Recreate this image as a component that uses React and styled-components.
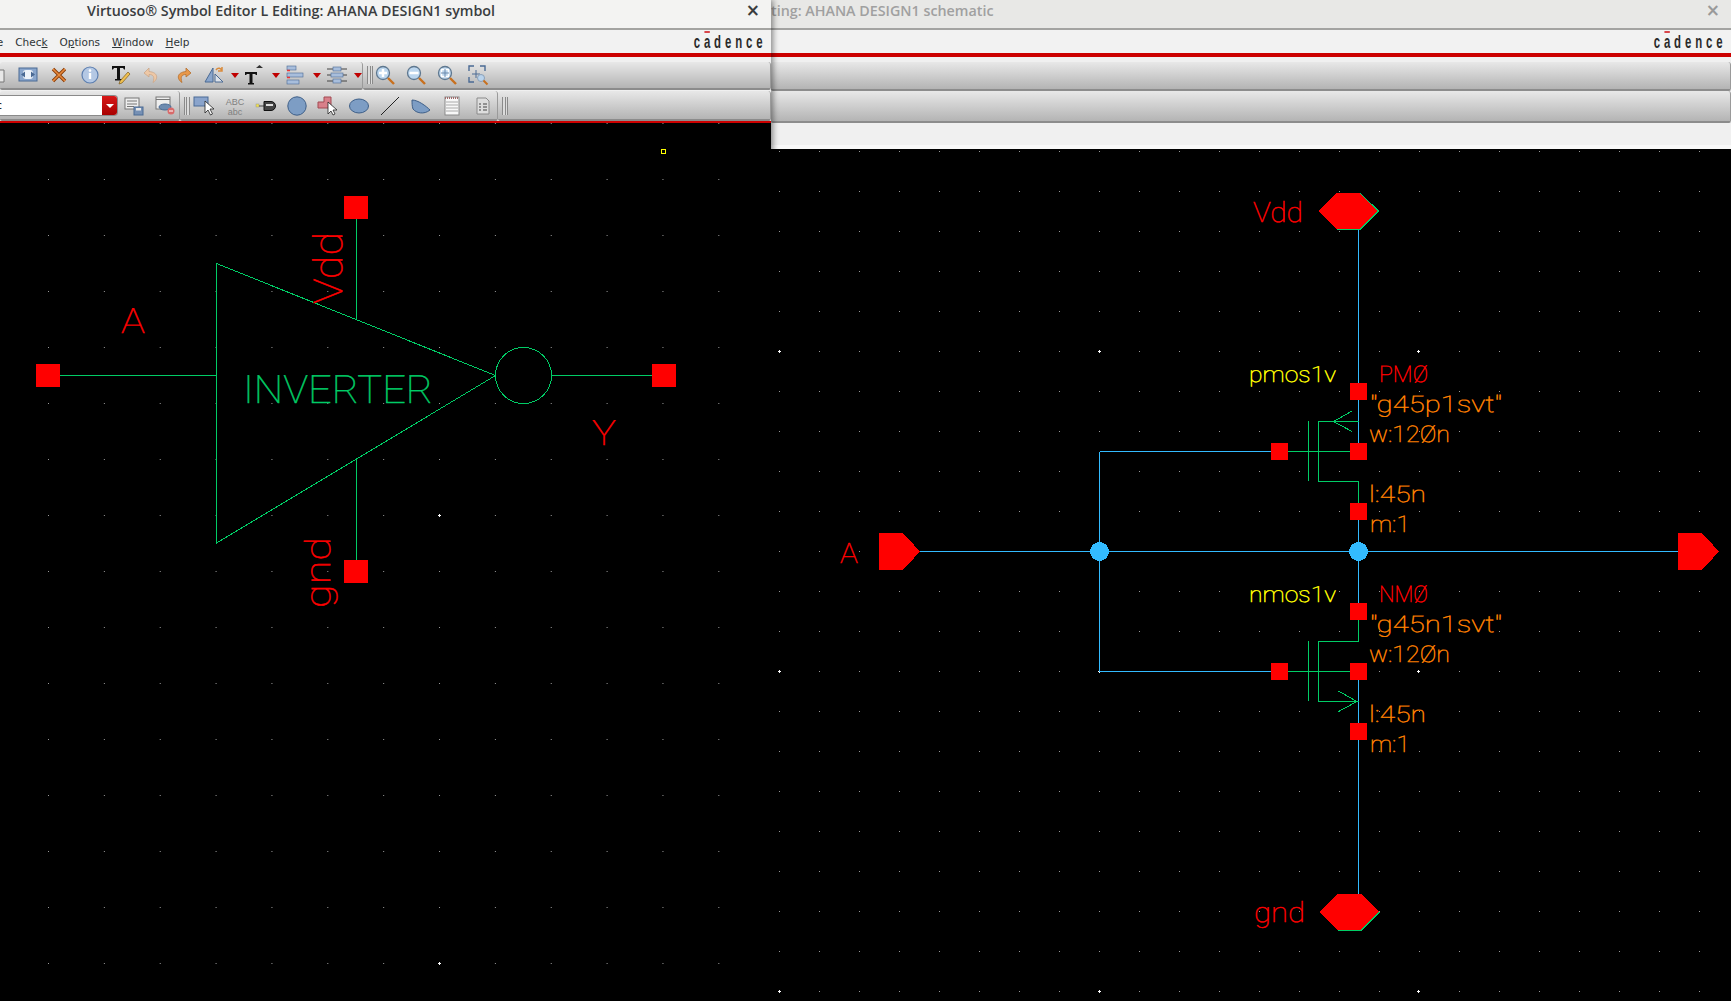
import React from "react";
import styled, { createGlobalStyle } from "styled-components";

const GREEN = "#00cc66";
const BLUE = "#33bbff";
const RED = "#ff0000";
const ORANGE = "#ff8000";
const YELLOW = "#ffff00";

const GlobalStyle = createGlobalStyle`
    html, body {
        margin: 0;
        padding: 0;
        background: #000;
        overflow: hidden;
    }
`;

const Desktop = styled.div`
    display: flex;
    width: 1731px;
    height: 1001px;
    overflow: hidden;
    background: #000;
`;

const Window = styled.div`
    position: relative;
    flex: ${(p) => (p.$front ? "none" : "1")};
    width: ${(p) => (p.$front ? "771px" : "auto")};
    min-width: 0;
    display: flex;
    flex-direction: column;
    overflow: hidden;
    background: #f0f0f0;
`;

const FrontShadow = styled.div`
    flex: none;
    display: flex;
    position: relative;
    z-index: 2;
    box-shadow: 2px 0 6px rgba(0, 0, 0, 0.45);
`;

const TitleBar = styled.div`
    flex: none;
    height: 28px;
    display: flex;
    align-items: center;
    justify-content: space-between;
    box-sizing: border-box;
    padding: 0 11px 7px ${(p) => p.$left}px;
    background: ${(p) => (p.$front ? "#f3f3f2" : "#e8e8e6")};
    color: ${(p) => (p.$front ? "#3a3d3f" : "#a0a0a0")};
    font-family: "Open Sans", sans-serif;
    font-size: 14.3px;
    font-weight: 600;
    white-space: nowrap;
    overflow: hidden;
`;

const Close = styled.span`
    font-family: "DejaVu Sans", sans-serif;
    font-size: 17px;
    font-weight: 700;
    line-height: 1;
    color: ${(p) => (p.$front ? "#3a3d3f" : "#9a9a9a")};
`;

const MenuBar = styled.div`
    flex: none;
    height: 25px;
    display: flex;
    align-items: center;
    justify-content: space-between;
    box-sizing: border-box;
    padding: 0 8px 0 0;
    background: #f2f2f2;
    border-top: 2px solid #a3a3a1;
    font-family: "DejaVu Sans", sans-serif;
    font-size: 10.5px;
    color: #2e3436;
`;

const MenuItems = styled.div`
    display: flex;
    gap: 12px;
    margin-left: -31.7px;
    padding-top: 1px;
`;

const Mnemonic = styled.span`
    text-decoration: underline;
`;

const Logo = styled.span`
    font-family: "Liberation Sans", sans-serif;
    font-size: 19px;
    font-weight: 700;
    letter-spacing: 6.5px;
    margin-left: auto;
    margin-right: -4px;
    color: #2b2b2b;
    line-height: 1;
    transform: scaleX(0.6);
    transform-origin: right center;
`;

const LogoA = styled.span`
    position: relative;

    &::before {
        content: "";
        position: absolute;
        left: 1px;
        top: 0;
        width: 9px;
        height: 2px;
        background: #d8454a;
    }
`;

const RedRule = styled.div`
    flex: none;
    height: ${(p) => p.$height}px;
    background: #cc0000;
`;

const ToolRow = styled.div`
    flex: none;
    display: flex;
    height: ${(p) => p.$height}px;
    margin-top: ${(p) => p.$top}px;
`;

const Segment = styled.div`
    display: flex;
    align-items: center;
    flex: ${(p) => (p.$grow ? "1" : "none")};
    width: ${(p) => (p.$width ? `${p.$width}px` : "auto")};
    box-sizing: border-box;
    overflow: hidden;
    padding-top: ${(p) => p.$pad || 0}px;
    background: linear-gradient(#e8e8e8, #b4b4b4);
    border-bottom: 2px solid #8c8c8c;
    border-right: 1px solid #9a9a9a;
    border-radius: 3px 3px 2px 2px;
`;

const Tool = styled.span`
    flex: none;
    width: 31px;
    display: flex;
    align-items: center;
    justify-content: center;
    margin-left: ${(p) => p.$shift || 0}px;

    svg {
        overflow: visible;
    }
`;

const DropArrow = styled.span`
    flex: none;
    width: 10px;
    height: 5px;
    display: flex;
    justify-content: center;

    &::before {
        content: "";
        border-left: 4px solid transparent;
        border-right: 4px solid transparent;
        border-top: 5px solid #c00000;
    }
`;

const Handle = styled.span`
    flex: none;
    width: 6px;
    height: 18px;
    margin: 0 ${(p) => p.$after || 0}px 0 4px;
    background: repeating-linear-gradient(90deg, #8a8a8a 0 1px, #dcdcdc 1px 2.5px);
`;

const Combo = styled.div`
    flex: none;
    width: 118px;
    height: 21px;
    display: flex;
    align-items: center;
    justify-content: space-between;
    box-sizing: border-box;
    background: #fff;
    border: 1px solid #8a8a8a;
    border-left: none;
    border-radius: 0 4px 4px 0;
    font-family: "DejaVu Sans", sans-serif;
    font-size: 11px;
    color: #222;
    overflow: hidden;
`;

const ComboText = styled.span`
    margin-left: -4px;
`;

const ComboButton = styled.span`
    width: 15px;
    height: 100%;
    display: flex;
    align-items: center;
    justify-content: center;
    background: linear-gradient(#d81818, #a80000);

    &::before {
        content: "";
        border-left: 4px solid transparent;
        border-right: 4px solid transparent;
        border-top: 4px solid #fff;
    }
`;

const Strip = styled.div`
    flex: none;
    height: 22px;
    background: #f0f0f0;
    border-bottom: 4px solid #f8f8f8;
`;

const Canvas = styled.svg`
    display: block;
    flex: 1;
    min-height: 0;
    width: 100%;
    background: #000;
    shape-rendering: crispEdges;
`;

const Line = styled.path`
    fill: none;
    stroke: ${(p) => p.$color};
    stroke-width: 1;
`;

const Label = styled.text`
    fill: ${(p) => p.$color};
    stroke: ${(p) => p.$color};
    stroke-width: 0.45px;
    font-family: Roboto, "Liberation Sans", sans-serif;
    font-weight: 100;
    font-size: ${(p) => p.$size}px;
    text-rendering: geometricPrecision;
`;

function Text({ x, y, w, size = 23, color = ORANGE, rotate, children }) {
    return (
        <Label
            x={x}
            y={y}
            textLength={w}
            lengthAdjust="spacingAndGlyphs"
            $size={size}
            $color={color}
            transform={rotate ? `rotate(${rotate} ${x} ${y})` : undefined}
        >
            {children}
        </Label>
    );
}

function Pin({ x, y, w = 17, h = 17 }) {
    return <rect x={x} y={y} width={w} height={h} fill={RED} />;
}

function Ico({ children, w = 20, h = 20 }) {
    return (
        <svg width={w} height={h} viewBox="0 0 20 20" shapeRendering="geometricPrecision">
            {children}
        </svg>
    );
}

const steel = "#8aa6cc";
const steelDark = "#4a6a94";
const lens = "#5f7890";

const icons = {
    page: (
        <Ico>
            <path d="M3 5h14v12H3z" fill="#e8e8e8" stroke="#777" />
        </Ico>
    ),
    fit: (
        <Ico>
            <rect x="1" y="3" width="18" height="13" fill={steel} stroke={steelDark} />
            <rect x="5" y="5" width="10" height="9" rx="3" fill="#eef3f9" />
            <path d="M3 9.500l4-3v6zM17 9.500l-4-3v6z" fill={steelDark} />
        </Ico>
    ),
    cross: (
        <Ico>
            <path d="M4 4l12 12M16 4L4 16" stroke="#8a3c08" strokeWidth="3.400" fill="none" />
            <path d="M4 4l12 12M16 4L4 16" stroke="#e88a3c" strokeWidth="1.600" fill="none" />
        </Ico>
    ),
    info: (
        <Ico>
            <circle cx="10" cy="10" r="8" fill="#b4c8e4" stroke="#5d7fb0" strokeWidth="1.200" />
            <path d="M10 8v6" stroke="#fff" strokeWidth="2.400" />
            <circle cx="10" cy="5.600" r="1.300" fill="#fff" />
        </Ico>
    ),
    textPencil: (
        <Ico>
            <path d="M1 1h13v3.500h-1L12 3H9v11h2v1.500H4V14h2V3H3L2 4.500H1z" fill="#111" />
            <path d="M8 19l1-3 8-9 2 2-8 9z" fill="#f0c050" stroke="#7a5a20" strokeWidth=".7" />
        </Ico>
    ),
    undo: (
        <Ico>
            <path d="M7 3L2 8l5 4V9.500c4 0 6 2 4 8 5-3 6-10-4-11z" fill="#eec8a6" stroke="#caa688" strokeWidth=".8" />
        </Ico>
    ),
    redo: (
        <Ico>
            <path d="M13 3l5 5-5 4V9.500c-4 0-6 2-4 8-5-3-6-10 4-11z" fill="#e8984a" stroke="#b5702e" strokeWidth=".8" />
        </Ico>
    ),
    mirror: (
        <Ico>
            <path d="M9 3v14H1z" fill={steel} stroke={steelDark} />
            <path d="M11 9v8h8z" fill="#dde2e8" stroke={steelDark} />
            <path d="M12 5c2-3 5-2 6 1M18 2v4h-4" fill="none" stroke="#d98b3c" strokeWidth="1.500" />
        </Ico>
    ),
    bigT: (
        <Ico>
            <path d="M0 7h12v3h-1l-1-1H7.500v9H9v1.500H3V18h1.500V9H2l-1 1H0z" fill="#111" />
            <path d="M11 3l3.500-3 3.500 3z" fill="#333" />
        </Ico>
    ),
    align: (
        <Ico>
            <rect x="1" y="1" width="9" height="4" fill="#a8bedc" stroke={steelDark} strokeWidth=".6" />
            <rect x="1" y="8" width="16" height="4" fill="#a8bedc" stroke={steelDark} strokeWidth=".6" />
            <rect x="1" y="15" width="12" height="4" fill="#a8bedc" stroke={steelDark} strokeWidth=".6" />
            <path d="M1 5.500h3M1 12.500h3" stroke="#e33" strokeWidth="1.600" />
        </Ico>
    ),
    distribute: (
        <Ico>
            <path d="M0 4h20M0 10h20M0 16h20" stroke="#444" />
            <rect x="6" y="2" width="8" height="4" fill="#a8bedc" stroke={steelDark} strokeWidth=".6" />
            <rect x="4" y="8" width="12" height="4" fill="#a8bedc" stroke={steelDark} strokeWidth=".6" />
            <rect x="6" y="14" width="8" height="4" fill="#a8bedc" stroke={steelDark} strokeWidth=".6" />
        </Ico>
    ),
    zoomIn: (
        <Ico>
            <circle cx="8" cy="8" r="6.500" fill="#bcd6ee" stroke={lens} strokeWidth="1.300" />
            <path d="M8 4v8M4 8h8" stroke="#fff" strokeWidth="2.500" />
            <path d="M13 13l6 6" stroke="#c8701e" strokeWidth="2.400" />
        </Ico>
    ),
    zoomOut: (
        <Ico>
            <circle cx="8" cy="8" r="6.500" fill="#bcd6ee" stroke={lens} strokeWidth="1.300" />
            <path d="M3.500 8h9" stroke="#fff" strokeWidth="2.500" />
            <path d="M13 13l6 6" stroke="#c8701e" strokeWidth="2.400" />
        </Ico>
    ),
    zoomFit: (
        <Ico>
            <circle cx="8" cy="8" r="6.500" fill="#bcd6ee" stroke={lens} strokeWidth="1.300" />
            <rect x="4.500" y="4.500" width="7" height="7" fill="none" stroke="#fff" strokeWidth="1.500" />
            <path d="M8 4v8M4 8h8" stroke="#6d8bad" />
            <path d="M13 13l6 6" stroke="#c8701e" strokeWidth="2.400" />
        </Ico>
    ),
    zoomArea: (
        <Ico>
            <path d="M1 6V1h5M12 1h5v5M1 12v5h5" fill="none" stroke={steelDark} strokeWidth="1.400" />
            <path d="M8 5v8M4 9h8" stroke={steelDark} />
            <circle cx="13" cy="13" r="3.500" fill="#b9d3ec" stroke="#8aa0b8" />
            <path d="M15.500 15.500l4 4" stroke="#c8701e" strokeWidth="2" />
        </Ico>
    ),
    note: (
        <Ico>
            <rect x="1" y="2" width="14" height="11" fill="#eee" stroke="#777" />
            <path d="M3 5h10M3 8h10M3 10.500h7" stroke="#777" />
            <rect x="10" y="11" width="9" height="8" fill="#7690b4" stroke={steelDark} />
            <rect x="12" y="12" width="5" height="2.500" fill="#e8e8e8" />
        </Ico>
    ),
    noteOff: (
        <Ico>
            <rect x="1" y="1" width="14" height="12" fill="#eee" stroke="#777" />
            <path d="M1 3.500h14" stroke="#777" />
            <ellipse cx="10" cy="11" rx="6" ry="3" fill="#6d8bb0" stroke={steelDark} />
            <circle cx="16" cy="15" r="3.500" fill="#d86a6a" />
            <path d="M14 15h4" stroke="#fff" />
        </Ico>
    ),
    selectBox: (
        <Ico>
            <rect x="0" y="1" width="14" height="9" fill="#8aa4cc" stroke="#4a6a96" />
            <path d="M11 5v12l3-3 2.500 5 2-1-2.500-5h4z" fill="#fff" stroke="#222" strokeWidth=".8" />
        </Ico>
    ),
    abc: (
        <svg width="20" height="20" viewBox="0 0 20 20">
            <text x="10" y="9" textAnchor="middle" fontFamily="Liberation Sans" fontSize="9" fill="#808080">ABC</text>
            <text x="10" y="18.500" textAnchor="middle" fontFamily="Liberation Sans" fontSize="9" fill="#808080">abc</text>
        </svg>
    ),
    wirePin: (
        <Ico>
            <rect x="0" y="8" width="3" height="3" fill="#f0e050" stroke="#998" strokeWidth=".5" />
            <path d="M3 10h5" stroke="#444" />
            <path d="M8 5.500h7a4.500 4.500 0 010 9H8z" fill="#444" stroke="#111" />
            <rect x="10" y="8" width="7" height="2" fill="#ddd" />
        </Ico>
    ),
    circle: (
        <Ico>
            <circle cx="10" cy="10" r="9.200" fill="#7d9dc4" stroke="#3e5f88" />
        </Ico>
    ),
    shape: (
        <Ico>
            <path d="M0 6h6V1h7v11H0z" fill="#d8808a" stroke="#a24a52" />
            <path d="M10 6v12l3-3 2 4 2-1-2-4h4z" fill="#fff" stroke="#222" strokeWidth=".8" />
        </Ico>
    ),
    ellipse: (
        <Ico>
            <ellipse cx="10" cy="10" rx="9.500" ry="7" fill="#7d9dc4" stroke="#3e5f88" />
        </Ico>
    ),
    slash: (
        <Ico>
            <path d="M1 19L19 1" stroke="#222" fill="none" />
        </Ico>
    ),
    wedge: (
        <Ico>
            <path d="M1 4c6 0 14 6 18 10-6 5-14 3-17-1-1-3-1-6-1-9z" fill="#7d9dc4" stroke="#3e5f88" />
        </Ico>
    ),
    pad: (
        <Ico>
            <rect x="3" y="1" width="14" height="18" fill="#f8f8f8" stroke="#8a8a8a" />
            <path d="M3 2h14" stroke="#a06a6a" strokeDasharray="1 1" strokeWidth="2" />
            <path d="M4 6h12M4 9h12M4 12h12M4 15h12" stroke="#aaa" />
        </Ico>
    ),
    doc: (
        <Ico>
            <path d="M4 2h9l3 3v13H4z" fill="#dedede" stroke="#8a8a8a" />
            <path d="M6 8h2M10 8h4M6 11h2M10 11h4M6 14h2M10 14h4" stroke="#444" strokeWidth="1.200" />
        </Ico>
    ),
};

const topTools = ["fit", "cross", "info", "textPencil", "undo", "redo"];
const menuTools = ["mirror", "bigT", "align", "distribute"];
const zoomTools = ["zoomIn", "zoomOut", "zoomFit", "zoomArea"];
const formTools = ["selectBox", "abc", "wirePin", "circle", "shape", "ellipse", "slash", "wedge", "pad", "doc"];

function SymbolCanvas() {
    return (
        <Canvas viewBox="0 123 771 878" preserveAspectRatio="xMinYMin slice">
            <defs>
                <pattern id="symGrid" patternUnits="userSpaceOnUse" x="48" y="123" width="55.860" height="56">
                    <rect width="1" height="1" fill="#9a9a9a" />
                </pattern>
            </defs>
            <rect x="0" y="123" width="771" height="878" fill="url(#symGrid)" />
            <path d="M438 515h3M439 514v3M438 963h3M439 962v3" stroke="#fff" />
            <rect x="661" y="149.500" width="4" height="4" fill="none" stroke={YELLOW} />

            <Line $color={GREEN} d="M216.500 263.500V543L495.500 375.500Z" />
            <Line $color={GREEN} d="M60 375.500H216.500M356.500 219V319M356.500 459V560M552 375.500H652" />
            <circle cx="523.500" cy="375.500" r="28" fill="none" stroke={GREEN} />

            <Pin x={36} y={364} w={24} h={23} />
            <Pin x={344} y={196} w={24} h={23} />
            <Pin x={652} y={364} w={24} h={23} />
            <Pin x={344} y={560} w={24} h={23} />

            <Text x={121} y={333} w={24} size={35} color={RED}>A</Text>
            <Text x={592} y={445} w={24} size={35} color={RED}>Y</Text>
            <Text x={342} y={304} w={72} size={40} color={RED} rotate={-90}>Vdd</Text>
            <Text x={330} y={608} w={71} size={35} color={RED} rotate={-90}>gnd</Text>
            <Text x={243} y={403} w={190} size={39} color={GREEN}>INVERTER</Text>
        </Canvas>
    );
}

function Mos({ y, top, arrow }) {
    return (
        <>
            <Line $color={GREEN} d={`M1288 ${y + 30.500}H1350M1308.500 ${y}V${y + 60}M1318.500 ${y + 30.500}V${y}M1318.500 ${y + 30.500}V${y + 60.500}`} />
            <Line $color={GREEN} d={`M1318.500 ${y + 0.500}H1358.500M1318.500 ${y + 60.500}H1358.500`} />
            <Line $color={GREEN} d={top ? `M1358.500 ${y + 60.500}V${y + 82}` : `M1358.500 ${y + 0.500}V${y - 21}`} />
            <Line $color={GREEN} d={arrow} />
            <Pin x={1271} y={y + 22} />
            <Pin x={1350} y={y + 22} />
            <Pin x={1350} y={y - 38} />
            <Pin x={1350} y={y + 82} />
        </>
    );
}

function Params({ y, kind, cell, name, model }) {
    return (
        <>
            <Text x={1249} y={y} w={87} size={22} color={YELLOW}>{cell}</Text>
            <Text x={1379} y={y} w={49} size={23} color={RED}>{name}</Text>
            <Text x={1370} y={y + 30} w={132} size={23}>"{model}"</Text>
            <Text x={1369} y={y + 60} w={81} size={23}>w:12Ø{kind}</Text>
            <Text x={1369} y={y + 120} w={57} size={23}>l:45{kind}</Text>
            <Text x={1370} y={y + 150} w={40} size={23}>m:1</Text>
        </>
    );
}

function SchematicCanvas() {
    const majors = [];
    [779, 1099, 1418].forEach((x) => {
        [351, 671, 991].forEach((y) => {
            majors.push(`M${x - 1} ${y}h3M${x} ${y - 1}v3`);
        });
    });

    return (
        <Canvas viewBox="771 149 960 852" preserveAspectRatio="xMinYMin slice">
            <defs>
                <pattern id="schGrid" patternUnits="userSpaceOnUse" x="19" y="151" width="40" height="40">
                    <rect width="1" height="1" fill="#9a9a9a" />
                </pattern>
            </defs>
            <rect x="771" y="149" width="960" height="852" fill="url(#schGrid)" />
            <path d={majors.join("")} stroke="#fff" />

            <Line $color={BLUE} d="M1358.500 229V443M1358.500 520V603M1358.500 680V723M1358.500 740V894" />
            <Line $color={BLUE} d="M920 551.500H1678M1099.500 451.500V671.500M1099.500 451.500H1271M1099.500 671.500H1271" />
            <circle cx="1099.500" cy="551.500" r="9.500" fill={BLUE} />
            <circle cx="1358.500" cy="551.500" r="9.500" fill={BLUE} />

            <Mos y={421} top arrow="M1352 411L1333.500 421.500L1352 431.500" />
            <Mos y={641} arrow="M1338.500 691L1357 701.500L1338.500 711.500" />

            <path d="M1318 211L1337 193H1360L1378.500 211L1360 229.500H1337Z" fill={RED} />
            <path d="M1360 193L1378.500 211L1360 229.500H1337" fill="none" stroke={GREEN} />
            <path d="M1319 912L1338 894H1361L1379.500 912L1361 930.500H1338Z" fill={RED} />
            <path d="M1379.500 912L1361 930.500H1338" fill="none" stroke={GREEN} />

            <path d="M879 533H903L920 551.500L903 570H879Z" fill={RED} />
            <path d="M1678 533H1702L1719 551.500L1702 570H1678Z" fill={RED} />

            <Text x={1253} y={222} w={50} size={28} color={RED}>Vdd</Text>
            <Text x={1254} y={922} w={51} size={28} color={RED}>gnd</Text>
            <Text x={840} y={563} w={18} size={28} color={RED}>A</Text>

            <Params y={382} kind="n" cell="pmos1v" name="PMØ" model="g45p1svt" />
            <Params y={602} kind="n" cell="nmos1v" name="NMØ" model="g45n1svt" />
        </Canvas>
    );
}

export default function App() {
    return (
        <Desktop>
            <GlobalStyle />

            <FrontShadow>
                <Window $front>
                    <TitleBar $front $left={87}>
                        <span>Virtuoso® Symbol Editor L Editing: AHANA DESIGN1 symbol</span>
                        <Close $front>×</Close>
                    </TitleBar>
                    <MenuBar>
                        <MenuItems>
                            <span>Create</span>
                            <span>Chec<Mnemonic>k</Mnemonic></span>
                            <span>O<Mnemonic>p</Mnemonic>tions</span>
                            <span><Mnemonic>W</Mnemonic>indow</span>
                            <span><Mnemonic>H</Mnemonic>elp</span>
                        </MenuItems>
                        <Logo>c<LogoA>a</LogoA>dence</Logo>
                    </MenuBar>
                    <RedRule $height={4} />
                    <ToolRow $height={28} $top={5}>
                        <Segment $width={363}>
                            <Tool $shift={-18.500}>{icons.page}</Tool>
                            {topTools.map((name) => (
                                <Tool key={name}>{icons[name]}</Tool>
                            ))}
                            {menuTools.map((name) => (
                                <React.Fragment key={name}>
                                    <Tool>{icons[name]}</Tool>
                                    <DropArrow />
                                </React.Fragment>
                            ))}
                        </Segment>
                        <Segment $grow>
                            <Handle $after={-4} />
                            {zoomTools.map((name) => (
                                <Tool key={name}>{icons[name]}</Tool>
                            ))}
                        </Segment>
                    </ToolRow>
                    <ToolRow $height={30} $top={1}>
                        <Segment $width={180} $pad={1}>
                            <Combo>
                                <ComboText>c</ComboText>
                                <ComboButton />
                            </Combo>
                            <Tool>{icons.note}</Tool>
                            <Tool>{icons.noteOff}</Tool>
                        </Segment>
                        <Segment $width={318} $pad={1}>
                            <Handle $after={-2} />
                            {formTools.map((name) => (
                                <Tool key={name}>{icons[name]}</Tool>
                            ))}
                        </Segment>
                        <Segment $grow $pad={1}>
                            <Handle />
                        </Segment>
                    </ToolRow>
                    <RedRule $height={2} />
                    <SymbolCanvas />
                </Window>
            </FrontShadow>

            <Window>
                <TitleBar $left={0}>
                    <span>ting: AHANA DESIGN1 schematic</span>
                    <Close>×</Close>
                </TitleBar>
                <MenuBar>
                    <Logo>c<LogoA>a</LogoA>dence</Logo>
                </MenuBar>
                <RedRule $height={4} />
                <ToolRow $height={29} $top={5}>
                    <Segment $grow />
                </ToolRow>
                <ToolRow $height={32} $top={0}>
                    <Segment $grow />
                </ToolRow>
                <Strip />
                <SchematicCanvas />
            </Window>
        </Desktop>
    );
}
